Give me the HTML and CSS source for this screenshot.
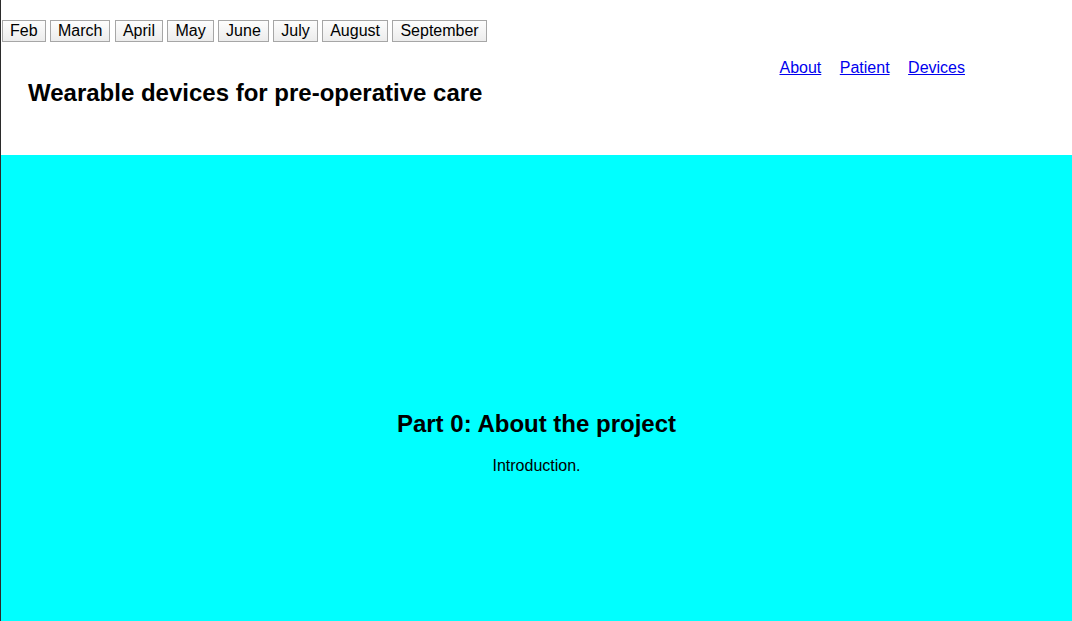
FILE: index.html
```html
<!DOCTYPE html>
<html lang="en">
<head>
<meta charset="utf-8">
<title>Wearable devices for pre-operative care</title>
<link rel="stylesheet" href="styles.css">
</head>
<body>
<div class="months">
  <button class="month">Feb</button>
  <button class="month">March</button>
  <button class="month">April</button>
  <button class="month">May</button>
  <button class="month">June</button>
  <button class="month">July</button>
  <button class="month">August</button>
  <button class="month">September</button>
</div>
<header class="header-row">
  <h1 class="title">Wearable devices for pre-operative care</h1>
  <nav class="nav">
    <a href="#about" class="nav-link">About</a>
    <a href="#patient" class="nav-link">Patient</a>
    <a href="#devices" class="nav-link">Devices</a>
  </nav>
</header>
<section class="part" id="about">
  <h2 class="part-title">Part 0: About the project</h2>
  <p class="part-text">Introduction.</p>
</section>
</body>
</html>
```
FILE: styles.css
```css
html, body {
  margin: 0;
  padding: 0;
}
body {
  font-family: "Liberation Sans", Arial, Helvetica, sans-serif;
  background: #ffffff;
  color: #000000;
  border-left: 1px solid #2b2b2b;
  overflow: hidden;
}
.months {
  padding: 20px 0 0 1px;
  height: 22px;
  font-size: 16px;
  line-height: 22px;
  white-space: nowrap;
}
.month {
  display: inline-block;
  vertical-align: top;
  font-family: "Liberation Sans", Arial, Helvetica, sans-serif;
  font-size: 16px;
  line-height: 18px;
  height: 22px;
  padding: 1px 7px;
  margin: 0;
  color: #000;
  border: 1px solid #a6a6a6;
  border-radius: 0;
  background: linear-gradient(#fdfdfd, #ececec);
}
.header-row {
  display: flex;
  justify-content: space-between;
  align-items: flex-start;
  height: 113px;
  padding: 0 107px 0 27px;
}
.title {
  margin: 37px 0 0 0;
  font-size: 24px;
  font-weight: bold;
  line-height: 28px;
}
.nav {
  display: flex;
  gap: 18.5px;
  margin-top: 17px;
  font-size: 16px;
  line-height: 18px;
}
.nav-link {
  color: #0000ee;
  text-decoration: underline;
}
.part {
  background: #00ffff;
  height: 466px;
  padding-top: 255px;
  box-sizing: border-box;
  text-align: center;
}
.part-title {
  margin: 0 0 19px 0;
  font-size: 24px;
  font-weight: bold;
  line-height: 28px;
}
.part-text {
  margin: 0;
  font-size: 16px;
  line-height: 18px;
}
```
